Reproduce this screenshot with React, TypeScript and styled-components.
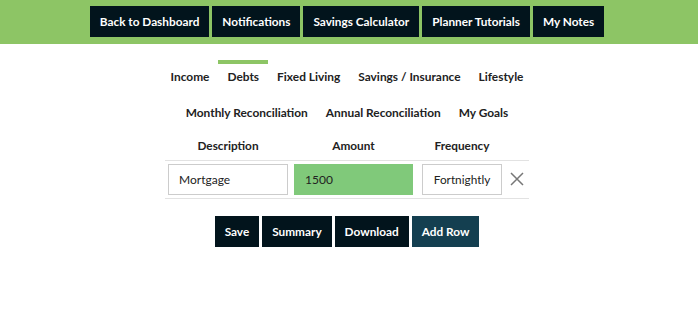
import styled, { createGlobalStyle } from 'styled-components';

const GlobalStyle = createGlobalStyle`
  html, body {
    margin: 0;
    padding: 0;
    background: #ffffff;
    font-family: Lato, "Open Sans", sans-serif;
  }
  * {
    box-sizing: border-box;
  }
`;

const TopBar = styled.header`
  background-color: #8dc565;
  height: 44px;
  padding: 6px 4px 0 0;
  display: flex;
  justify-content: center;
  align-items: flex-start;
  gap: 3px;
`;

const NavButton = styled.button`
  height: 31px;
  padding: 0 10px;
  border: none;
  background-color: #02141c;
  color: #ffffff;
  font-family: Lato, sans-serif;
  font-weight: 700;
  font-size: 11.8px;
  cursor: pointer;
`;

const Tabs = styled.nav`
  display: flex;
  flex-direction: column;
  align-items: center;
  padding: 16px 4px 0 0;
`;

const TabRow = styled.div`
  display: flex;
  justify-content: center;
  align-items: flex-start;
  height: 36px;
`;

const Tab = styled.div<{ $active?: boolean }>`
  padding: 0 9px;
  border-top: 4px solid ${(p) => (p.$active ? '#8dc565' : 'transparent')};
  display: flex;
  align-items: center;
  height: 28px;
  font-weight: 700;
  font-size: 11.9px;
  color: #222;
  cursor: pointer;
`;

const TableWrap = styled.div`
  display: flex;
  justify-content: center;
  padding: 0 4px 0 0;
`;

const Table = styled.table`
  border-collapse: collapse;
  table-layout: fixed;
  width: 364px;
`;

const Col = styled.col<{ $w: number }>`
  width: ${(p) => p.$w}px;
`;

const HeadCell = styled.th`
  font-weight: 700;
  font-size: 11.8px;
  color: #222;
  height: 28px;
  padding: 0 3px;
  text-align: left;
`;

const HeadLabel = styled.div<{ $w: number }>`
  width: ${(p) => p.$w}px;
  text-align: center;
`;

const Row = styled.tr`
  border-top: 1px solid #e2e2e2;
  border-bottom: 1px solid #e2e2e2;
`;

const Cell = styled.td`
  padding: 3px;
  height: 37px;
  vertical-align: middle;
`;

const Input = styled.input<{ $w: number; $filled?: boolean }>`
  width: ${(p) => p.$w}px;
  height: 31px;
  border: 1px solid ${(p) => (p.$filled ? '#80c97a' : '#cccccc')};
  background-color: ${(p) => (p.$filled ? '#80c97a' : '#ffffff')};
  padding: 0 10px;
  font-family: Lato, sans-serif;
  font-size: 12px;
  color: #222;
  outline: none;
`;

const SelectBox = styled.div`
  width: 80px;
  height: 31px;
  border: 1px solid #cccccc;
  display: flex;
  align-items: center;
  justify-content: center;
  font-size: 11.8px;
  color: #222;
`;

const RemoveButton = styled.button`
  border: none;
  background: none;
  padding: 0 0 0 2px;
  display: flex;
  align-items: center;
  cursor: pointer;
`;

const Actions = styled.div`
  display: flex;
  justify-content: center;
  gap: 3px;
  padding: 17px 4px 0 0;
`;

const ActionButton = styled.button<{ $accent?: boolean }>`
  height: 31px;
  padding: 0 10px;
  border: none;
  background-color: ${(p) => (p.$accent ? '#143f50' : '#02141c')};
  color: #ffffff;
  font-family: Lato, sans-serif;
  font-weight: 700;
  font-size: 11.8px;
  cursor: pointer;
`;

const navItems = ['Back to Dashboard', 'Notifications', 'Savings Calculator', 'Planner Tutorials', 'My Notes'];
const tabRows = [
  ['Income', 'Debts', 'Fixed Living', 'Savings / Insurance', 'Lifestyle'],
  ['Monthly Reconciliation', 'Annual Reconciliation', 'My Goals'],
];

export default function App() {
  return (
    <>
      <GlobalStyle />
      <TopBar>
        {navItems.map((n) => (
          <NavButton key={n}>{n}</NavButton>
        ))}
      </TopBar>
      <Tabs>
        {tabRows.map((row, i) => (
          <TabRow key={i}>
            {row.map((t) => (
              <Tab key={t} $active={t === 'Debts'}>
                {t}
              </Tab>
            ))}
          </TabRow>
        ))}
      </Tabs>
      <TableWrap>
        <Table>
          <colgroup>
            <Col $w={126} />
            <Col $w={128} />
            <Col $w={86} />
            <Col $w={24} />
          </colgroup>
          <thead>
            <tr>
              <HeadCell>
                <HeadLabel $w={120}>Description</HeadLabel>
              </HeadCell>
              <HeadCell>
                <HeadLabel $w={119}>Amount</HeadLabel>
              </HeadCell>
              <HeadCell>
                <HeadLabel $w={80}>Frequency</HeadLabel>
              </HeadCell>
              <HeadCell />
            </tr>
          </thead>
          <tbody>
            <Row>
              <Cell>
                <Input $w={120} defaultValue="Mortgage" />
              </Cell>
              <Cell>
                <Input $w={119} $filled defaultValue="1500" />
              </Cell>
              <Cell>
                <SelectBox>Fortnightly</SelectBox>
              </Cell>
              <Cell>
                <RemoveButton aria-label="Remove row">
                  <svg width="14" height="14" viewBox="0 0 14 14">
                    <path d="M1 1 L13 13 M13 1 L1 13" stroke="#777" strokeWidth="1.5" fill="none" />
                  </svg>
                </RemoveButton>
              </Cell>
            </Row>
          </tbody>
        </Table>
      </TableWrap>
      <Actions>
        <ActionButton>Save</ActionButton>
        <ActionButton>Summary</ActionButton>
        <ActionButton>Download</ActionButton>
        <ActionButton $accent>Add Row</ActionButton>
      </Actions>
    </>
  );
}
